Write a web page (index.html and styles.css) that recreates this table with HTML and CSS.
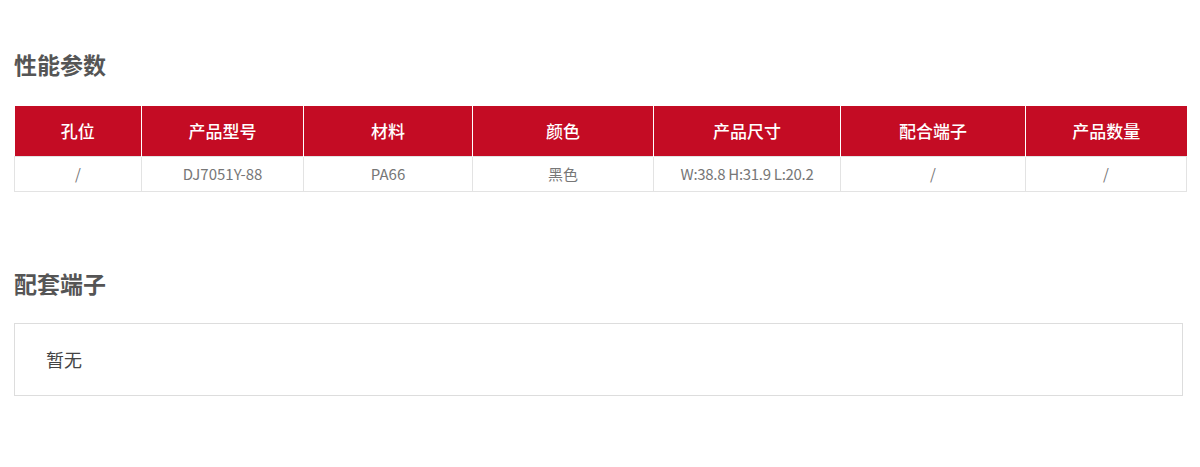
FILE: index.html
```html
<!DOCTYPE html>
<html lang="zh">
<head>
<meta charset="utf-8">
<link rel="stylesheet" href="styles.css">
</head>
<body>
<div class="page">
  <section class="sec sec-params">
    <h2 class="title">性能参数</h2>
    <table class="params">
      <colgroup>
        <col style="width:127px"><col style="width:162px"><col style="width:169px"><col style="width:181px"><col style="width:187px"><col style="width:185px"><col style="width:161px">
      </colgroup>
      <thead>
        <tr><th>孔位</th><th>产品型号</th><th>材料</th><th>颜色</th><th>产品尺寸</th><th>配合端子</th><th>产品数量</th></tr>
      </thead>
      <tbody>
        <tr><td>/</td><td>DJ7051Y-88</td><td>PA66</td><td>黑色</td><td class="dims">W:38.8 H:31.9 L:20.2</td><td>/</td><td>/</td></tr>
      </tbody>
    </table>
  </section>
  <section class="sec sec-match">
    <h2 class="title">配套端子</h2>
    <div class="box">暂无</div>
  </section>
</div>
</body>
</html>
```

FILE: styles.css
```css
* { box-sizing: border-box; }
html, body { margin: 0; padding: 0; background: #fff; }
body { font-family: "Noto Sans CJK SC", "Noto Sans", sans-serif; }
.page { width: 1200px; padding: 47px 14px 0; }
.title { margin: 0; font-size: 23px; line-height: 34px; font-weight: 700; color: #555; }
.params { margin-top: 25px; width: 1172px; border-collapse: collapse; table-layout: fixed; }
.params th { height: 50px; background: #c40c24; color: #fff; font-size: 17px; font-weight: 500; text-align: center; border-left: 1px solid #fff; padding: 0; }
.params th:first-child { border-left: none; }
.params td { height: 35px; border: 1px solid #e3e3e3; color: #777; font-size: 15px; text-align: center; padding: 0; }
.params td.dims { letter-spacing: -0.3px; }
.sec-match { margin-top: 74px; }
.box { margin-top: 23px; width: 1169px; height: 73px; border: 1px solid #ddd; padding: 0 31px; display: flex; align-items: center; font-size: 18px; color: #444; }
```
